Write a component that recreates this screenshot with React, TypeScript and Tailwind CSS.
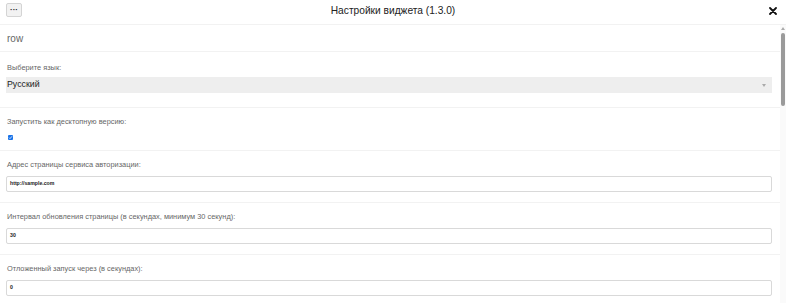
import React from "react";

function Field({ label, value }: { label: string; value: string }) {
  return (
    <div className="border-b border-[#f2f2f2] pl-[6px] pr-[8px] pt-[8px] pb-[10px]">
      <div className="h-[12px] text-[7.4px] leading-[12px] text-[#666] pl-px">{label}</div>
      <div className="mt-[5px] flex h-[16px] items-center rounded-[2px] border border-[#d9d9d9] bg-white px-[3px] text-[5.2px] font-bold text-[#222]">
        {value}
      </div>
    </div>
  );
}

export default function App() {
  return (
    <div className="flex h-[303px] w-[799px] flex-col overflow-hidden bg-white font-['Liberation_Sans',Arial,sans-serif]">
      <div className="flex w-[786px] flex-col">
        {/* header */}
        <div className="relative flex h-[25px] items-center justify-center border-b border-[#f2f2f2]">
          <button className="absolute left-[6px] top-[3px] flex h-[14px] w-[16px] items-center justify-center rounded-[2px] border border-[#d4d4d4] bg-[#f2f2f2] text-[8px] font-bold leading-none text-[#222]">
            ···
          </button>
          <div className="-mt-[3px] text-[10.2px] text-[#222]">Настройки виджета (1.3.0)</div>
          <svg className="absolute right-[9px] top-[7px]" width="8" height="8" viewBox="0 0 8 8">
            <path d="M1 1L7 7M7 1L1 7" stroke="#111" strokeWidth="1.8" strokeLinecap="round" />
          </svg>
        </div>

        <div className="flex h-[278px]">
          {/* content */}
          <div className="w-[780px]">
            <div className="flex h-[27px] items-center border-b border-[#f2f2f2] px-[7px] pt-px text-[10px] text-[#666]">
              row
            </div>

            <div className="border-b border-[#f2f2f2] pl-[6px] pr-[8px] pt-[10px] pb-[14px]">
              <div className="h-[12px] text-[7.4px] leading-[12px] text-[#666] pl-px">Выберите язык:</div>
              <div className="mt-[3px] flex h-[16px] items-center justify-between bg-[#eeeeee] pl-[1px] pr-[5px] text-[8.8px] text-[#222]">
                <span>Русский</span>
                <svg width="4" height="3" viewBox="0 0 4 3" className="mr-[1px]">
                  <path d="M0 0H4L2 3Z" fill="#aaa" />
                </svg>
              </div>
            </div>

            <div className="h-[43px] border-b border-[#f2f2f2] px-[6px] pt-[8px]">
              <div className="h-[12px] text-[7.4px] leading-[12px] text-[#666] pl-px">Запустить как десктопную версию:</div>
              <div className="mt-[7px] ml-[2px] flex h-[5px] w-[5px] items-center justify-center rounded-[1px] bg-[#1a73e8]">
                <svg width="5" height="5" viewBox="0 0 5 5">
                  <path d="M1 2.6L2 3.6L4 1.3" stroke="#fff" strokeWidth="0.8" fill="none" />
                </svg>
              </div>
            </div>

            <Field label="Адрес страницы сервиса авторизации:" value="http://sample.com" />
            <Field label="Интервал обновления страницы (в секундах, минимум 30 секунд):" value="30" />
            <Field label="Отложенный запуск через (в секундах):" value="0" />
          </div>

          {/* scrollbar */}
          <div className="flex w-[6px] flex-col items-center bg-[#fafafa] pt-[2px]">
            <svg width="4" height="3" viewBox="0 0 4 3">
              <path d="M0 3H4L2 0Z" fill="#aaa" />
            </svg>
            <div className="mt-[3px] h-[73px] w-[4px] rounded-[2px] bg-[#9a9a9a]" />
          </div>
        </div>
      </div>
    </div>
  );
}
